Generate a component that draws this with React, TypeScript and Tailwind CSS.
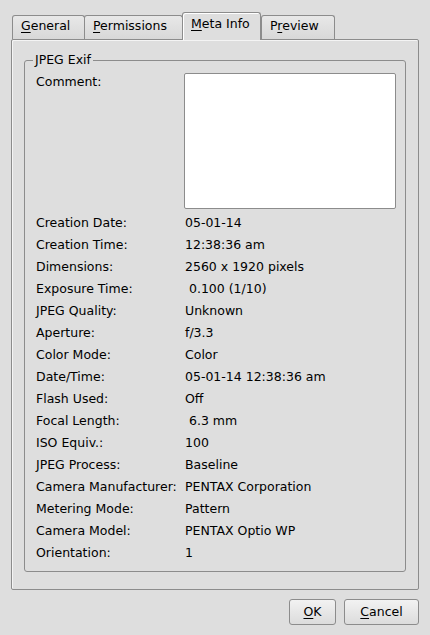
import React from "react";

const rows: [string, string][] = [
  ["Creation Date:", "05-01-14"],
  ["Creation Time:", "12:38:36 am"],
  ["Dimensions:", "2560 x 1920 pixels"],
  ["Exposure Time:", " 0.100 (1/10)"],
  ["JPEG Quality:", "Unknown"],
  ["Aperture:", "f/3.3"],
  ["Color Mode:", "Color"],
  ["Date/Time:", "05-01-14 12:38:36 am"],
  ["Flash Used:", "Off"],
  ["Focal Length:", " 6.3 mm"],
  ["ISO Equiv.:", "100"],
  ["JPEG Process:", "Baseline"],
  ["Camera Manufacturer:", "PENTAX Corporation"],
  ["Metering Mode:", "Pattern"],
  ["Camera Model:", "PENTAX Optio WP"],
  ["Orientation:", "1"],
];

function Tab({
  w,
  selected,
  children,
}: {
  w: string;
  selected?: boolean;
  children: React.ReactNode;
}) {
  if (selected) {
    return (
      <div
        className={`${w} h-[28px] -mb-px relative z-10 border border-b-0 border-[#8c8c8c] rounded-t-[3px] bg-[#dedede] shadow-[inset_1px_1px_0_#ffffff] pl-[8px] pt-[3px] leading-[16px]`}
      >
        {children}
      </div>
    );
  }
  return (
    <div
      className={`${w} h-[24px] border border-b-0 border-[#8c8c8c] rounded-t-[3px] bg-gradient-to-b from-[#e8e8e8] to-[#d8d8d8] pl-[8px] pt-[2px] leading-[16px] -mr-px`}
    >
      {children}
    </div>
  );
}

export default function App() {
  return (
    <div
      className="w-[430px] h-[635px] bg-[#dedede] text-black text-[12.5px] overflow-hidden"
      style={{ fontFamily: '"DejaVu Sans", Verdana, sans-serif' }}
    >
      <div className="pt-[11px] pl-[11px] w-[419px]">
        {/* tabs */}
        <div className="flex items-end pl-[1px] h-[28px]">
          <Tab w="w-[73px]">
            <u className="underline-offset-2">G</u>eneral
          </Tab>
          <Tab w="w-[99px]">
            <u className="underline-offset-2">P</u>ermissions
          </Tab>
          <Tab w="w-[79px]" selected>
            <u className="underline-offset-2">M</u>eta Info
          </Tab>
          <Tab w="w-[74px]">
            P<u className="underline-offset-2">r</u>eview
          </Tab>
        </div>
        {/* panel */}
        <div className="h-[551px] border border-[#8c8c8c] rounded-[2px] shadow-[inset_1px_1px_0_#f4f4f4] pt-[12px] pl-[12px] pr-[12px]">
          <fieldset className="border border-[#8c8c8c] rounded-[3px] pb-[7px]">
            <legend className="ml-[8px] px-[2px] leading-[16px]">JPEG Exif</legend>
            <div className="pl-[11px] pr-[9px]">
              <div className="flex mt-[5px]">
                <div className="w-[148px] leading-[16px] pt-px">Comment:</div>
                <div className="flex-1 h-[136px] bg-white border border-[#8c8c8c] rounded-[2px]" />
              </div>
              <div className="mt-[3px]">
                {rows.map(([k, v]) => (
                  <div key={k} className="flex h-[22px] items-center leading-[22px]">
                    <div className="w-[149px] whitespace-pre">{k}</div>
                    <div className="whitespace-pre">{v}</div>
                  </div>
                ))}
              </div>
            </div>
          </fieldset>
        </div>
        {/* buttons */}
        <div className="flex justify-end gap-[8px] mt-[9px]">
          <button className="w-[47px] h-[26px] border border-[#8c8c8c] rounded-[3px] bg-gradient-to-b from-[#f2f2f2] to-[#dcdcdc] leading-[16px]">
            <u className="underline-offset-2">O</u>K
          </button>
          <button className="w-[75px] h-[26px] border border-[#8c8c8c] rounded-[3px] bg-gradient-to-b from-[#f2f2f2] to-[#dcdcdc] leading-[16px]">
            <u className="underline-offset-2">C</u>ancel
          </button>
        </div>
      </div>
    </div>
  );
}
